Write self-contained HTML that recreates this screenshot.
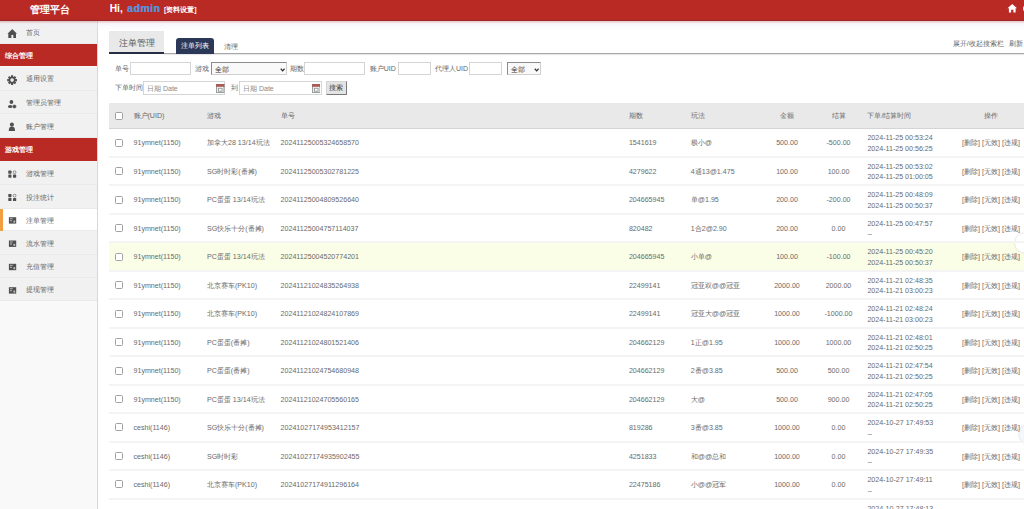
<!DOCTYPE html><html><head><meta charset="utf-8"><style>
*{margin:0;padding:0;box-sizing:border-box}
html,body{width:1024px;height:509px;overflow:hidden;background:#fff;font-family:"Liberation Sans",sans-serif;color:#666}
.a{position:absolute;white-space:nowrap}
.t{position:absolute;white-space:nowrap;font-size:7.1px;line-height:10px;color:#6a6a6a}
.tc{transform-origin:50% 50%}
.hdr{position:absolute;left:0;top:0;width:1024px;height:20.6px;background:linear-gradient(#b92a25 0,#b92a25 19.3px,#98272a 20.6px);z-index:5}
.hsh{position:absolute;left:0;top:20.6px;width:1024px;height:10px;background:linear-gradient(rgba(200,80,80,.35),rgba(225,220,230,.35) 2.5px,rgba(240,240,250,.4) 4px,rgba(255,255,255,0) 10px);z-index:4}
.side{position:absolute;left:0;top:20px;width:98px;height:489px;background:#f9f9f9;border-right:1px solid #d8d8d8}
.si{position:absolute;left:0;width:97px;background:#f1f1f1;border-bottom:1px solid #eaeaea}
.sr{position:absolute;left:0;width:97px;background:#b92a25;color:#fff;font-weight:bold;font-size:7px}
.stx{position:absolute;left:25.5px;font-size:7.2px;color:#666;line-height:10px}
.cb{position:absolute;width:8px;height:8px;border:1px solid #a0a0a0;border-radius:1.5px;background:#fff}
.inp{position:absolute;height:13px;border:1px solid #d5d5d5;background:#fff}
.lbl{position:absolute;font-size:7px;color:#666;line-height:10px;white-space:nowrap}
</style></head><body>
<div class="hdr">
<div class="a" style="left:29.8px;top:4.8px;font-size:10px;line-height:10px;font-weight:bold;color:#fff">管理平台</div>
<div class="a" style="left:109.7px;top:3.6px;font-size:10.2px;line-height:10px;font-weight:bold;color:#fff">Hi,</div>
<div class="a" style="left:127px;top:3.3px;font-size:10.6px;line-height:10px;font-weight:bold;color:#5d8fd6;letter-spacing:0.4px;text-shadow:0.35px 0 0 #5d8fd6">admin</div>
<div class="a" style="left:164px;top:5.5px;font-size:7px;line-height:8px;font-weight:bold;color:#fff">[资料设置]</div>
<svg class="a" style="left:1007.2px;top:2.8px" width="10.5" height="10.5" viewBox="0 0 11 10"><path d="M5.5 0.5 L0.5 5 L2 5 L2 9.5 L4.3 9.5 L4.3 6.5 L6.7 6.5 L6.7 9.5 L9 9.5 L9 5 L10.5 5 Z" fill="#fff"/></svg>
<div class="a" style="left:1022.6px;top:4.8px;width:7px;height:7px;border-radius:3.5px;background:#fff"></div>
</div>
<div class="hsh"></div>
<div class="side"></div>
<div class="si" style="top:20px;height:24.299999999999997px;background:#f1f1f1"><div class="stx" style="top:8.05px">首页</div></div>
<div class="sr" style="top:44.3px;height:22.2px"><div class="a" style="left:5px;top:6.4px;line-height:10px;font-size:7.2px">综合管理</div></div>
<div class="si" style="top:66.5px;height:24.5px;background:#f1f1f1"><div class="stx" style="top:7.45px">通用设置</div></div>
<div class="si" style="top:91px;height:23.299999999999997px;background:#f1f1f1"><div class="stx" style="top:7.05px">管理员管理</div></div>
<div class="si" style="top:114.3px;height:24.000000000000014px;background:#f1f1f1"><div class="stx" style="top:7.60px">账户管理</div></div>
<div class="sr" style="top:138.3px;height:22.4px"><div class="a" style="left:5px;top:6.6px;line-height:10px;font-size:7.2px">游戏管理</div></div>
<div class="si" style="top:160.7px;height:24.30000000000001px;background:#f1f1f1"><div class="stx" style="top:7.95px">游戏管理</div></div>
<div class="si" style="top:185px;height:23.5px;background:#f1f1f1"><div class="stx" style="top:7.55px">投注统计</div></div>
<div class="si" style="top:208.5px;height:22.5px;background:#fff"><div class="a" style="left:0;top:0;width:3px;height:22.5px;background:#f0a040"></div><div class="stx" style="top:7.05px">注单管理</div></div>
<div class="si" style="top:231px;height:23.5px;background:#f1f1f1"><div class="stx" style="top:7.55px">流水管理</div></div>
<div class="si" style="top:254.5px;height:23.0px;background:#f1f1f1"><div class="stx" style="top:7.30px">充值管理</div></div>
<div class="si" style="top:277.5px;height:23.30000000000001px;background:#f1f1f1"><div class="stx" style="top:7.45px">提现管理</div></div>
<svg class="a" style="left:0;top:0;z-index:2" width="97" height="509" viewBox="0 0 97 509"><path fill="#505050" d="M12.3 28.9 L7.4 33.7 L8.3 33.7 L8.3 37.9 L11.4 37.9 L11.4 35 L13.3 35 L13.3 37.9 L16 37.9 L16 33.7 L17 33.7 Z"/><path fill="#505050" fill-rule="evenodd" d="M10.98 76.68 L11.06 75.21 L13.14 75.21 L13.22 76.68 L13.73 76.89 L14.82 75.91 L16.29 77.38 L15.31 78.47 L15.52 78.98 L16.99 79.06 L16.99 81.14 L15.52 81.22 L15.31 81.73 L16.29 82.82 L14.82 84.29 L13.73 83.31 L13.22 83.52 L13.14 84.99 L11.06 84.99 L10.98 83.52 L10.47 83.31 L9.38 84.29 L7.91 82.82 L8.89 81.73 L8.68 81.22 L7.21 81.14 L7.21 79.06 L8.68 78.98 L8.89 78.47 L7.91 77.38 L9.38 75.91 L10.47 76.89ZM13.90 80.10 A1.8 1.8 0 1 0 10.30 80.10 A1.8 1.8 0 1 0 13.90 80.10Z"/><circle cx="11.4" cy="102" r="1.9" fill="#505050"/><ellipse cx="10.3" cy="106.4" rx="2.4" ry="1.5" fill="#505050"/><circle cx="14.4" cy="106.5" r="2.1" fill="#505050" stroke="#efefef" stroke-width=".5"/><circle cx="11.9" cy="124.4" r="2" fill="#505050"/><path fill="#505050" d="M8.8 131 C8.8 127.6 10 126.6 11.9 126.6 C13.8 126.6 15 127.6 15 131Z"/><rect x="8.3" y="170.6" width="3.2" height="3.2" rx=".6" fill="#505050"/><circle cx="14.6" cy="172.2" r="1.4" fill="none" stroke="#505050" stroke-width=".6"/><rect x="8.3" y="174.5" width="3.2" height="3.2" rx=".6" fill="#505050"/><rect x="13" y="174.5" width="3.2" height="3.2" rx=".6" fill="#505050"/><rect x="8.3" y="194.0" width="3.2" height="3.2" rx=".6" fill="#505050"/><circle cx="14.6" cy="195.6" r="1.4" fill="none" stroke="#505050" stroke-width=".6"/><rect x="8.3" y="197.9" width="3.2" height="3.2" rx=".6" fill="#505050"/><rect x="13" y="197.9" width="3.2" height="3.2" rx=".6" fill="#505050"/><rect x="8.9" y="217.2" width="7.3" height="6.4" fill="#505050"/><rect x="10" y="218.2" width="2.6" height="1" fill="#bbb"/><rect x="10" y="220.2" width="2" height="1" fill="#bbb"/><rect x="13.4" y="220.6" width="1.8" height="2" fill="#bbb"/><rect x="8.9" y="240.5" width="7.3" height="6.4" fill="#505050"/><rect x="10" y="241.5" width="2.6" height="1" fill="#bbb"/><rect x="10" y="243.5" width="2" height="1" fill="#bbb"/><rect x="13.4" y="243.9" width="1.8" height="2" fill="#bbb"/><rect x="8.9" y="263.8" width="7.3" height="6.4" fill="#505050"/><rect x="10" y="264.8" width="2.6" height="1" fill="#bbb"/><rect x="10" y="266.8" width="2" height="1" fill="#bbb"/><rect x="13.4" y="267.2" width="1.8" height="2" fill="#bbb"/><rect x="8.9" y="287.2" width="7.3" height="6.4" fill="#505050"/><rect x="10" y="288.2" width="2.6" height="1" fill="#bbb"/><rect x="10" y="290.2" width="2" height="1" fill="#bbb"/><rect x="13.4" y="290.59999999999997" width="1.8" height="2" fill="#bbb"/></svg>
<div class="a" style="left:109px;top:31px;width:55px;height:22.5px;background:#e9e9e9;border-bottom:2px solid #262d45"></div>
<div class="a" style="left:109px;top:37px;width:55px;text-align:center;font-size:8.8px;line-height:12px;color:#555">注单管理</div>
<div class="a" style="left:164px;top:53px;width:860px;height:1px;background:#a8a8a8;box-shadow:0 1px 1px rgba(0,0,0,.12)"></div>
<div class="a" style="left:176px;top:38px;width:37.5px;height:15.5px;background:#2c3858;border-radius:3px 3px 0 0"></div>
<div class="a" style="left:176px;top:41px;width:37.5px;text-align:center;font-size:7px;line-height:10px;color:#fff">注单列表</div>
<div class="lbl" style="left:224px;top:41.5px">清理</div>
<div class="lbl" style="left:952.8px;top:39px">展开/收起搜索栏</div>
<div class="lbl" style="left:1009px;top:39px">刷新</div>
<div class="lbl" style="left:114.6px;top:63.8px">单号</div>
<div class="inp" style="left:130px;top:62.4px;width:61px"></div>
<div class="lbl" style="left:195px;top:63.8px">游戏</div>
<div class="inp" style="left:211px;top:62.4px;width:76px;border-color:#8c8c8c #d0d0d0 #d0d0d0 #8c8c8c;background:#f9f9f9;border-width:1px"><div class="a" style="left:3px;top:1.5px;font-size:7px;line-height:10px;color:#333">全部</div><svg class="a" style="left:67.6px;top:4.6px" width="5.4" height="4" viewBox="0 0 5 4"><path d="M0.6 0.8 L2.5 2.9 L4.4 0.8" stroke="#333" stroke-width="1.3" fill="none"/></svg></div>
<div class="lbl" style="left:289.6px;top:63.8px">期数</div>
<div class="inp" style="left:304px;top:62.4px;width:61.3px"></div>
<div class="lbl" style="left:369.7px;top:63.8px">账户UID</div>
<div class="inp" style="left:397.6px;top:62.4px;width:33.4px"></div>
<div class="lbl" style="left:435px;top:63.8px">代理人UID</div>
<div class="inp" style="left:469px;top:62.4px;width:32.5px"></div>
<div class="inp" style="left:507px;top:62.4px;width:34px;border-color:#8c8c8c #d0d0d0 #d0d0d0 #8c8c8c;background:#f9f9f9"><div class="a" style="left:3px;top:1.5px;font-size:7px;line-height:10px;color:#333">全部</div><svg class="a" style="left:25.6px;top:4.6px" width="5.4" height="4" viewBox="0 0 5 4"><path d="M0.6 0.8 L2.5 2.9 L4.4 0.8" stroke="#333" stroke-width="1.3" fill="none"/></svg></div>
<div class="lbl" style="left:114.6px;top:83px">下单时间</div>
<div class="inp" style="left:143px;top:81px;width:82.4px;height:13.6px"><div class="a" style="left:3px;top:1.8px;font-size:7px;line-height:10px;color:#888">日期 Date</div></div>
<svg class="a" style="left:216.3px;top:83.8px" width="8.4" height="8.8" viewBox="0 0 8.4 8.8"><rect x="0.4" y="0.4" width="7.6" height="8" fill="#f4f4f4" stroke="#7d8a85" stroke-width=".8"/><rect x="0" y="0" width="8.4" height="2.8" fill="#a95a52"/><rect x="2.3" y="4.2" width="3.8" height="3" fill="none" stroke="#808080" stroke-width=".7"/></svg>
<div class="lbl" style="left:230.5px;top:83px">到</div>
<div class="inp" style="left:239px;top:81px;width:82.6px;height:13.6px"><div class="a" style="left:3px;top:1.8px;font-size:7px;line-height:10px;color:#888">日期 Date</div></div>
<svg class="a" style="left:311.7px;top:83.8px" width="8.4" height="8.8" viewBox="0 0 8.4 8.8"><rect x="0.4" y="0.4" width="7.6" height="8" fill="#f4f4f4" stroke="#7d8a85" stroke-width=".8"/><rect x="0" y="0" width="8.4" height="2.8" fill="#a95a52"/><rect x="2.3" y="4.2" width="3.8" height="3" fill="none" stroke="#808080" stroke-width=".7"/></svg>
<div class="a" style="left:326.1px;top:81.2px;width:20.7px;height:13.6px;background:#e4e4e4;border:1px solid;border-color:#d5d5d5 #7a7a7a #7a7a7a #d5d5d5;font-size:7px;line-height:12.6px;text-align:center;color:#3a3a3a">搜索</div>
<div class="a" style="left:108.7px;top:103.4px;width:920px;height:25.3px;background:#e9e9e9;border-bottom:1px solid #d4d4d4"></div>
<div class="cb" style="left:115px;top:111.8px"></div>
<div class="t" style="left:133.5px;top:111.40px">账户(UID)</div>
<div class="t" style="left:207px;top:111.40px">游戏</div>
<div class="t" style="left:280.6px;top:111.40px">单号</div>
<div class="t" style="left:628.9px;top:111.40px">期数</div>
<div class="t" style="left:690.8px;top:111.40px">玩法</div>
<div class="t tc" style="left:737px;width:100px;text-align:center;top:111.40px">金额</div>
<div class="t tc" style="left:788.5px;width:100px;text-align:center;top:111.40px">结算</div>
<div class="t" style="left:867.4px;top:111.40px">下单/结算时间</div>
<div class="t tc" style="left:941px;width:100px;text-align:center;top:111.40px">操作</div>
<div class="a" style="left:108.7px;top:128.50px;width:920px;height:28.47px;background:#fff"></div>
<div class="a" style="left:108.7px;top:155.97px;width:920px;height:2px;background:#f4f4f4;z-index:1"></div>
<div class="cb" style="left:115px;top:138.74px"></div>
<div class="t" style="left:133.5px;top:138.34px">91ymnet(1150)</div>
<div class="t" style="left:207px;top:138.34px">加拿大28 13/14玩法</div>
<div class="t" style="left:280.6px;top:138.34px">20241125005324658570</div>
<div class="t" style="left:628.9px;top:138.34px">1541619</div>
<div class="t" style="left:690.8px;top:138.34px">极小@</div>
<div class="t tc" style="left:737px;width:100px;text-align:center;top:138.34px">500.00</div>
<div class="t tc" style="left:788.5px;width:100px;text-align:center;top:138.34px">-500.00</div>
<div class="t" style="left:867.4px;top:133.44px">2024-11-25 00:53:24</div>
<div class="t" style="left:867.4px;top:143.94px">2024-11-25 00:56:25</div>
<div class="t tc" style="left:941px;width:100px;text-align:center;top:138.34px">[删除] [无效] [违规]</div>
<div class="a" style="left:108.7px;top:156.97px;width:920px;height:28.47px;background:#fff"></div>
<div class="a" style="left:108.7px;top:184.44px;width:920px;height:2px;background:#f4f4f4;z-index:1"></div>
<div class="cb" style="left:115px;top:167.20px"></div>
<div class="t" style="left:133.5px;top:166.80px">91ymnet(1150)</div>
<div class="t" style="left:207px;top:166.80px">SG时时彩(番摊)</div>
<div class="t" style="left:280.6px;top:166.80px">20241125005302781225</div>
<div class="t" style="left:628.9px;top:166.80px">4279622</div>
<div class="t" style="left:690.8px;top:166.80px">4通13@1.475</div>
<div class="t tc" style="left:737px;width:100px;text-align:center;top:166.80px">100.00</div>
<div class="t tc" style="left:788.5px;width:100px;text-align:center;top:166.80px">100.00</div>
<div class="t" style="left:867.4px;top:161.90px">2024-11-25 00:53:02</div>
<div class="t" style="left:867.4px;top:172.40px">2024-11-25 01:00:05</div>
<div class="t tc" style="left:941px;width:100px;text-align:center;top:166.80px">[删除] [无效] [违规]</div>
<div class="a" style="left:108.7px;top:185.44px;width:920px;height:28.47px;background:#fff"></div>
<div class="a" style="left:108.7px;top:212.91px;width:920px;height:2px;background:#f4f4f4;z-index:1"></div>
<div class="cb" style="left:115px;top:195.68px"></div>
<div class="t" style="left:133.5px;top:195.28px">91ymnet(1150)</div>
<div class="t" style="left:207px;top:195.28px">PC蛋蛋 13/14玩法</div>
<div class="t" style="left:280.6px;top:195.28px">20241125004809526640</div>
<div class="t" style="left:628.9px;top:195.28px">204665945</div>
<div class="t" style="left:690.8px;top:195.28px">单@1.95</div>
<div class="t tc" style="left:737px;width:100px;text-align:center;top:195.28px">200.00</div>
<div class="t tc" style="left:788.5px;width:100px;text-align:center;top:195.28px">-200.00</div>
<div class="t" style="left:867.4px;top:190.38px">2024-11-25 00:48:09</div>
<div class="t" style="left:867.4px;top:200.88px">2024-11-25 00:50:37</div>
<div class="t tc" style="left:941px;width:100px;text-align:center;top:195.28px">[删除] [无效] [违规]</div>
<div class="a" style="left:108.7px;top:213.91px;width:920px;height:28.47px;background:#fff"></div>
<div class="a" style="left:108.7px;top:241.38px;width:920px;height:2px;background:#f4f4f4;z-index:1"></div>
<div class="cb" style="left:115px;top:224.14px"></div>
<div class="t" style="left:133.5px;top:223.74px">91ymnet(1150)</div>
<div class="t" style="left:207px;top:223.74px">SG快乐十分(番摊)</div>
<div class="t" style="left:280.6px;top:223.74px">20241125004757114037</div>
<div class="t" style="left:628.9px;top:223.74px">820482</div>
<div class="t" style="left:690.8px;top:223.74px">1合2@2.90</div>
<div class="t tc" style="left:737px;width:100px;text-align:center;top:223.74px">200.00</div>
<div class="t tc" style="left:788.5px;width:100px;text-align:center;top:223.74px">0.00</div>
<div class="t" style="left:867.4px;top:218.84px">2024-11-25 00:47:57</div>
<div class="t" style="left:867.4px;top:229.34px">--</div>
<div class="t tc" style="left:941px;width:100px;text-align:center;top:223.74px">[删除] [无效] [违规]</div>
<div class="a" style="left:108.7px;top:242.38px;width:920px;height:28.47px;background:#fafee6"></div>
<div class="a" style="left:108.7px;top:269.85px;width:920px;height:2px;background:#f4f4f4;z-index:1"></div>
<div class="cb" style="left:115px;top:252.62px"></div>
<div class="t" style="left:133.5px;top:252.22px">91ymnet(1150)</div>
<div class="t" style="left:207px;top:252.22px">PC蛋蛋 13/14玩法</div>
<div class="t" style="left:280.6px;top:252.22px">20241125004520774201</div>
<div class="t" style="left:628.9px;top:252.22px">204665945</div>
<div class="t" style="left:690.8px;top:252.22px">小单@</div>
<div class="t tc" style="left:737px;width:100px;text-align:center;top:252.22px">100.00</div>
<div class="t tc" style="left:788.5px;width:100px;text-align:center;top:252.22px">-100.00</div>
<div class="t" style="left:867.4px;top:247.31px">2024-11-25 00:45:20</div>
<div class="t" style="left:867.4px;top:257.82px">2024-11-25 00:50:37</div>
<div class="t tc" style="left:941px;width:100px;text-align:center;top:252.22px">[删除] [无效] [违规]</div>
<div class="a" style="left:108.7px;top:270.85px;width:920px;height:28.47px;background:#fff"></div>
<div class="a" style="left:108.7px;top:298.32px;width:920px;height:2px;background:#f4f4f4;z-index:1"></div>
<div class="cb" style="left:115px;top:281.09px"></div>
<div class="t" style="left:133.5px;top:280.69px">91ymnet(1150)</div>
<div class="t" style="left:207px;top:280.69px">北京赛车(PK10)</div>
<div class="t" style="left:280.6px;top:280.69px">20241121024835264938</div>
<div class="t" style="left:628.9px;top:280.69px">22499141</div>
<div class="t" style="left:690.8px;top:280.69px">冠亚双@@冠亚</div>
<div class="t tc" style="left:737px;width:100px;text-align:center;top:280.69px">2000.00</div>
<div class="t tc" style="left:788.5px;width:100px;text-align:center;top:280.69px">2000.00</div>
<div class="t" style="left:867.4px;top:275.79px">2024-11-21 02:48:35</div>
<div class="t" style="left:867.4px;top:286.29px">2024-11-21 03:00:23</div>
<div class="t tc" style="left:941px;width:100px;text-align:center;top:280.69px">[删除] [无效] [违规]</div>
<div class="a" style="left:108.7px;top:299.32px;width:920px;height:28.47px;background:#fff"></div>
<div class="a" style="left:108.7px;top:326.79px;width:920px;height:2px;background:#f4f4f4;z-index:1"></div>
<div class="cb" style="left:115px;top:309.56px"></div>
<div class="t" style="left:133.5px;top:309.16px">91ymnet(1150)</div>
<div class="t" style="left:207px;top:309.16px">北京赛车(PK10)</div>
<div class="t" style="left:280.6px;top:309.16px">20241121024824107869</div>
<div class="t" style="left:628.9px;top:309.16px">22499141</div>
<div class="t" style="left:690.8px;top:309.16px">冠亚大@@冠亚</div>
<div class="t tc" style="left:737px;width:100px;text-align:center;top:309.16px">1000.00</div>
<div class="t tc" style="left:788.5px;width:100px;text-align:center;top:309.16px">-1000.00</div>
<div class="t" style="left:867.4px;top:304.26px">2024-11-21 02:48:24</div>
<div class="t" style="left:867.4px;top:314.76px">2024-11-21 03:00:23</div>
<div class="t tc" style="left:941px;width:100px;text-align:center;top:309.16px">[删除] [无效] [违规]</div>
<div class="a" style="left:108.7px;top:327.79px;width:920px;height:28.47px;background:#fff"></div>
<div class="a" style="left:108.7px;top:355.26px;width:920px;height:2px;background:#f4f4f4;z-index:1"></div>
<div class="cb" style="left:115px;top:338.02px"></div>
<div class="t" style="left:133.5px;top:337.62px">91ymnet(1150)</div>
<div class="t" style="left:207px;top:337.62px">PC蛋蛋(番摊)</div>
<div class="t" style="left:280.6px;top:337.62px">20241121024801521406</div>
<div class="t" style="left:628.9px;top:337.62px">204662129</div>
<div class="t" style="left:690.8px;top:337.62px">1正@1.95</div>
<div class="t tc" style="left:737px;width:100px;text-align:center;top:337.62px">1000.00</div>
<div class="t tc" style="left:788.5px;width:100px;text-align:center;top:337.62px">1000.00</div>
<div class="t" style="left:867.4px;top:332.73px">2024-11-21 02:48:01</div>
<div class="t" style="left:867.4px;top:343.23px">2024-11-21 02:50:25</div>
<div class="t tc" style="left:941px;width:100px;text-align:center;top:337.62px">[删除] [无效] [违规]</div>
<div class="a" style="left:108.7px;top:356.26px;width:920px;height:28.47px;background:#fff"></div>
<div class="a" style="left:108.7px;top:383.73px;width:920px;height:2px;background:#f4f4f4;z-index:1"></div>
<div class="cb" style="left:115px;top:366.50px"></div>
<div class="t" style="left:133.5px;top:366.10px">91ymnet(1150)</div>
<div class="t" style="left:207px;top:366.10px">PC蛋蛋(番摊)</div>
<div class="t" style="left:280.6px;top:366.10px">20241121024754680948</div>
<div class="t" style="left:628.9px;top:366.10px">204662129</div>
<div class="t" style="left:690.8px;top:366.10px">2番@3.85</div>
<div class="t tc" style="left:737px;width:100px;text-align:center;top:366.10px">500.00</div>
<div class="t tc" style="left:788.5px;width:100px;text-align:center;top:366.10px">500.00</div>
<div class="t" style="left:867.4px;top:361.20px">2024-11-21 02:47:54</div>
<div class="t" style="left:867.4px;top:371.70px">2024-11-21 02:50:25</div>
<div class="t tc" style="left:941px;width:100px;text-align:center;top:366.10px">[删除] [无效] [违规]</div>
<div class="a" style="left:108.7px;top:384.73px;width:920px;height:28.47px;background:#fff"></div>
<div class="a" style="left:108.7px;top:412.20px;width:920px;height:2px;background:#f4f4f4;z-index:1"></div>
<div class="cb" style="left:115px;top:394.97px"></div>
<div class="t" style="left:133.5px;top:394.57px">91ymnet(1150)</div>
<div class="t" style="left:207px;top:394.57px">PC蛋蛋 13/14玩法</div>
<div class="t" style="left:280.6px;top:394.57px">20241121024705560165</div>
<div class="t" style="left:628.9px;top:394.57px">204662129</div>
<div class="t" style="left:690.8px;top:394.57px">大@</div>
<div class="t tc" style="left:737px;width:100px;text-align:center;top:394.57px">500.00</div>
<div class="t tc" style="left:788.5px;width:100px;text-align:center;top:394.57px">900.00</div>
<div class="t" style="left:867.4px;top:389.67px">2024-11-21 02:47:05</div>
<div class="t" style="left:867.4px;top:400.17px">2024-11-21 02:50:25</div>
<div class="t tc" style="left:941px;width:100px;text-align:center;top:394.57px">[删除] [无效] [违规]</div>
<div class="a" style="left:108.7px;top:413.20px;width:920px;height:28.47px;background:#fff"></div>
<div class="a" style="left:108.7px;top:440.67px;width:920px;height:2px;background:#f4f4f4;z-index:1"></div>
<div class="cb" style="left:115px;top:423.44px"></div>
<div class="t" style="left:133.5px;top:423.04px">ceshi(1146)</div>
<div class="t" style="left:207px;top:423.04px">SG快乐十分(番摊)</div>
<div class="t" style="left:280.6px;top:423.04px">20241027174953412157</div>
<div class="t" style="left:628.9px;top:423.04px">819286</div>
<div class="t" style="left:690.8px;top:423.04px">3番@3.85</div>
<div class="t tc" style="left:737px;width:100px;text-align:center;top:423.04px">1000.00</div>
<div class="t tc" style="left:788.5px;width:100px;text-align:center;top:423.04px">0.00</div>
<div class="t" style="left:867.4px;top:418.14px">2024-10-27 17:49:53</div>
<div class="t" style="left:867.4px;top:428.64px">--</div>
<div class="t tc" style="left:941px;width:100px;text-align:center;top:423.04px">[删除] [无效] [违规]</div>
<div class="a" style="left:108.7px;top:441.67px;width:920px;height:28.47px;background:#fff"></div>
<div class="a" style="left:108.7px;top:469.14px;width:920px;height:2px;background:#f4f4f4;z-index:1"></div>
<div class="cb" style="left:115px;top:451.90px"></div>
<div class="t" style="left:133.5px;top:451.50px">ceshi(1146)</div>
<div class="t" style="left:207px;top:451.50px">SG时时彩</div>
<div class="t" style="left:280.6px;top:451.50px">20241027174935902455</div>
<div class="t" style="left:628.9px;top:451.50px">4251833</div>
<div class="t" style="left:690.8px;top:451.50px">和@@总和</div>
<div class="t tc" style="left:737px;width:100px;text-align:center;top:451.50px">1000.00</div>
<div class="t tc" style="left:788.5px;width:100px;text-align:center;top:451.50px">0.00</div>
<div class="t" style="left:867.4px;top:446.61px">2024-10-27 17:49:35</div>
<div class="t" style="left:867.4px;top:457.11px">--</div>
<div class="t tc" style="left:941px;width:100px;text-align:center;top:451.50px">[删除] [无效] [违规]</div>
<div class="a" style="left:108.7px;top:470.14px;width:920px;height:28.47px;background:#fff"></div>
<div class="a" style="left:108.7px;top:497.61px;width:920px;height:2px;background:#f4f4f4;z-index:1"></div>
<div class="cb" style="left:115px;top:480.38px"></div>
<div class="t" style="left:133.5px;top:479.98px">ceshi(1146)</div>
<div class="t" style="left:207px;top:479.98px">北京赛车(PK10)</div>
<div class="t" style="left:280.6px;top:479.98px">20241027174911296164</div>
<div class="t" style="left:628.9px;top:479.98px">22475186</div>
<div class="t" style="left:690.8px;top:479.98px">小@@冠军</div>
<div class="t tc" style="left:737px;width:100px;text-align:center;top:479.98px">1000.00</div>
<div class="t tc" style="left:788.5px;width:100px;text-align:center;top:479.98px">0.00</div>
<div class="t" style="left:867.4px;top:475.08px">2024-10-27 17:49:11</div>
<div class="t" style="left:867.4px;top:485.58px">--</div>
<div class="t tc" style="left:941px;width:100px;text-align:center;top:479.98px">[删除] [无效] [违规]</div>
<div class="a" style="left:108.7px;top:498.61px;width:920px;height:28.47px;background:#fff"></div>
<div class="a" style="left:108.7px;top:526.08px;width:920px;height:2px;background:#f4f4f4;z-index:1"></div>
<div class="cb" style="left:115px;top:508.85px"></div>
<div class="t" style="left:133.5px;top:508.45px">ceshi(1146)</div>
<div class="t" style="left:207px;top:508.45px">SG时时彩</div>
<div class="t" style="left:280.6px;top:508.45px">20241027174813123456</div>
<div class="t" style="left:628.9px;top:508.45px">4251832</div>
<div class="t" style="left:690.8px;top:508.45px">和@@总和</div>
<div class="t tc" style="left:737px;width:100px;text-align:center;top:508.45px">1000.00</div>
<div class="t tc" style="left:788.5px;width:100px;text-align:center;top:508.45px">0.00</div>
<div class="t" style="left:867.4px;top:503.55px">2024-10-27 17:48:13</div>
<div class="t" style="left:867.4px;top:514.05px">--</div>
<div class="t tc" style="left:941px;width:100px;text-align:center;top:508.45px">[删除] [无效] [违规]</div>
<div class="a" style="left:1015px;top:232.5px;width:20px;height:20px;border-radius:10px;background:#fff;box-shadow:0 0 2px rgba(0,0,0,.22)"></div>
<div class="a" style="left:1018.5px;top:423.5px;width:20px;height:20px;border-radius:10px;background:#f4f7fb;box-shadow:0 0 2px rgba(60,90,140,.3)"></div>
</body></html>
